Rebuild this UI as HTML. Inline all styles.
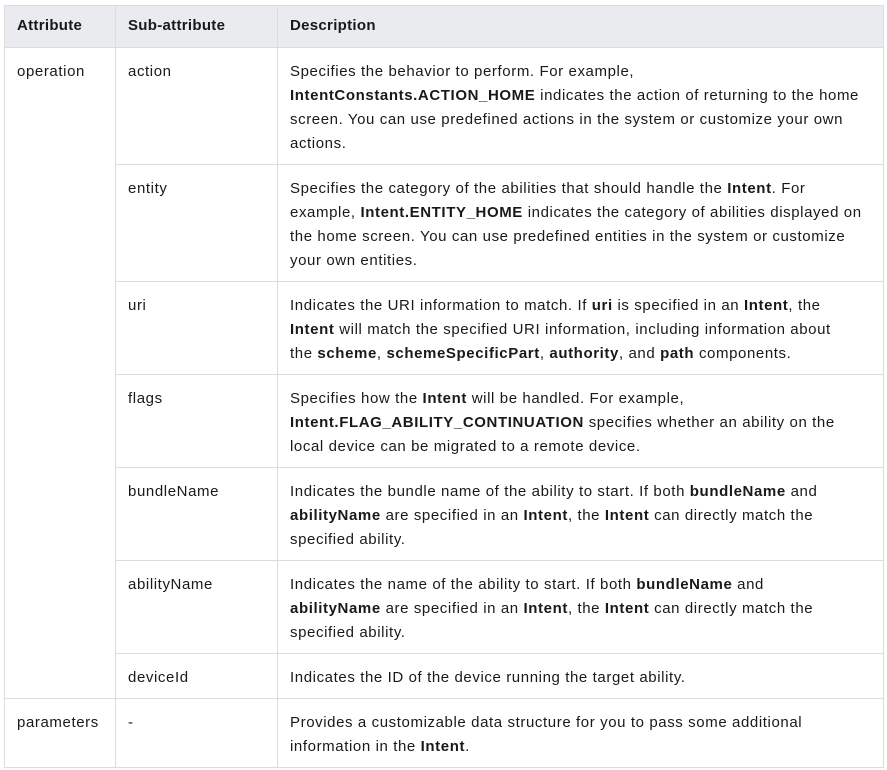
<!DOCTYPE html>
<html><head><style>
body{margin:0;background:#fff;font-family:"Liberation Sans",sans-serif;font-size:15px;color:#191919;letter-spacing:0.6px;}
table{position:absolute;left:4px;top:5px;border-collapse:collapse;width:880px;table-layout:fixed;}
td,th{border:1px solid #dcdcdc;padding:12px 8px 8px 12px;line-height:24px;vertical-align:top;text-align:left;white-space:nowrap;}
th{background:#e9ebee;font-weight:bold;padding:8px 8px 9px 12px;letter-spacing:0.3px;}
b{font-weight:bold;}
</style></head><body>
<table>
<colgroup><col style="width:111px"><col style="width:162px"><col></colgroup>
<tr><th>Attribute</th><th>Sub-attribute</th><th>Description</th></tr>
<tr><td rowspan="7">operation</td><td>action</td><td>Specifies the behavior to perform. For example,<br><b>IntentConstants.ACTION_HOME</b> indicates the action of returning to the home<br>screen. You can use predefined actions in the system or customize your own<br>actions.</td></tr>
<tr><td>entity</td><td>Specifies the category of the abilities that should handle the <b>Intent</b>. For<br>example, <b>Intent.ENTITY_HOME</b> indicates the category of abilities displayed on<br>the home screen. You can use predefined entities in the system or customize<br>your own entities.</td></tr>
<tr><td>uri</td><td>Indicates the URI information to match. If <b>uri</b> is specified in an <b>Intent</b>, the<br><b>Intent</b> will match the specified URI information, including information about<br>the <b>scheme</b>, <b>schemeSpecificPart</b>, <b>authority</b>, and <b>path</b> components.</td></tr>
<tr><td>flags</td><td>Specifies how the <b>Intent</b> will be handled. For example,<br><b>Intent.FLAG_ABILITY_CONTINUATION</b> specifies whether an ability on the<br>local device can be migrated to a remote device.</td></tr>
<tr><td>bundleName</td><td>Indicates the bundle name of the ability to start. If both <b>bundleName</b> and<br><b>abilityName</b> are specified in an <b>Intent</b>, the <b>Intent</b> can directly match the<br>specified ability.</td></tr>
<tr><td>abilityName</td><td>Indicates the name of the ability to start. If both <b>bundleName</b> and<br><b>abilityName</b> are specified in an <b>Intent</b>, the <b>Intent</b> can directly match the<br>specified ability.</td></tr>
<tr><td>deviceId</td><td>Indicates the ID of the device running the target ability.</td></tr>
<tr><td>parameters</td><td>-</td><td>Provides a customizable data structure for you to pass some additional<br>information in the <b>Intent</b>.</td></tr>
</table>
</body></html>
